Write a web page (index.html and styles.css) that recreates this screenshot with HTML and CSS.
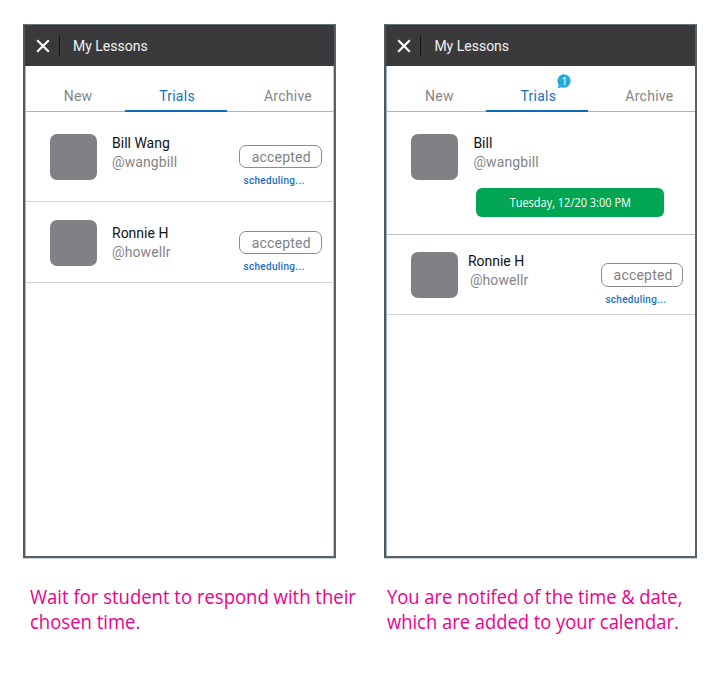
FILE: index.html
```html
<!DOCTYPE html>
<html lang="en">
<head>
<meta charset="utf-8">
<title>My Lessons</title>
<link rel="stylesheet" href="styles.css">
</head>
<body>
<main class="board">
  <section class="column">
    <div class="phone">
      <header class="bar">
        <svg class="close" viewBox="0 0 14 14"><path d="M1.2 1.2 12.8 12.8M12.8 1.2 1.2 12.8"/></svg>
        <span class="divider"></span>
        <h1 class="title">My Lessons</h1>
      </header>
      <nav class="tabs">
        <span class="tab tab-new">New</span>
        <span class="tab tab-trials">Trials</span>
        <span class="tab tab-archive">Archive</span>
      </nav>
      <article class="row row-wang">
        <div class="avatar"></div>
        <div class="who"><div class="name">Bill Wang</div><div class="handle">@wangbill</div></div>
        <div class="state"><span class="pill">accepted</span><span class="note">scheduling...</span></div>
      </article>
      <article class="row row-ronnie">
        <div class="avatar"></div>
        <div class="who"><div class="name">Ronnie H</div><div class="handle">@howellr</div></div>
        <div class="state"><span class="pill">accepted</span><span class="note">scheduling...</span></div>
      </article>
    </div>
    <p class="caption"><span class="line">Wait for student to respond with their</span><span class="line">chosen time.</span></p>
  </section>
  <section class="column">
    <div class="phone">
      <header class="bar">
        <svg class="close" viewBox="0 0 14 14"><path d="M1.2 1.2 12.8 12.8M12.8 1.2 1.2 12.8"/></svg>
        <span class="divider"></span>
        <h1 class="title">My Lessons</h1>
      </header>
      <nav class="tabs">
        <span class="tab tab-new">New</span>
        <span class="tab tab-trials">Trials
          <span class="badge"><svg viewBox="0 0 14 15"><path d="M7 .3a6.7 6.7 0 1 1-2.6 12.9L.9 14.2l.7-3.4A6.7 6.7 0 0 1 7 .3Z"/></svg><b>1</b></span>
        </span>
        <span class="tab tab-archive">Archive</span>
      </nav>
      <article class="row row-booked">
        <div class="avatar"></div>
        <div class="who"><div class="name">Bill</div><div class="handle">@wangbill</div><div class="slot"><span>Tuesday, 12/20 3:00 PM</span></div></div>
      </article>
      <article class="row row-waiting">
        <div class="avatar"></div>
        <div class="who"><div class="name">Ronnie H</div><div class="handle">@howellr</div></div>
        <div class="state"><span class="pill">accepted</span><span class="note">scheduling...</span></div>
      </article>
    </div>
    <p class="caption caption-right"><span class="line">You are notifed of the time &amp; date,</span><span class="line">which are added to your calendar.</span></p>
  </section>
</main>
</body>
</html>
```
FILE: styles.css
```css
* { box-sizing: border-box; }
body {
  margin: 0;
  width: 714px;
  height: 679px;
  overflow: hidden;
  background: #fff;
  font-family: Roboto, "Liberation Sans", sans-serif;
}
.board { display: flex; gap: 48.4px; padding: 24px 0 0 23px; }
.column { width: 313px; flex: none; }
.phone {
  height: 534px;
  border: 2px solid #596168;
  border-top: 1px solid #68747c;
  border-left-color: #55565a;
  box-shadow: inset 1px 0 #82cdea, inset -1px 0 #c4c6c8, 0 1px #c9d3d9;
}
.column + .column .phone { box-shadow: inset 1px 0 #8ab8cd, 0 1px #c9d3d9; }

.bar {
  display: flex;
  align-items: center;
  height: 41px;
  padding-left: 11px;
  background: #3a3a3c;
}
.close { width: 14px; height: 14px; fill: none; stroke: #fff; stroke-width: 2.2; }
.divider { width: 1px; height: 21px; margin-left: 9px; background: #161618; }
.title {
  margin: 0 0 0 13px;
  font-size: 14px;
  font-weight: 400;
  line-height: 16px;
  letter-spacing: 0;
  color: #f2f2f2;
}

.tabs {
  display: grid;
  grid-template-columns: 100px 102px 107px;
  height: 46px;
  box-shadow: inset 0 -1px #b3b4b6;
}
.tab {
  position: relative;
  padding-top: 22px;
  font-size: 14px;
  line-height: 16px;
  letter-spacing: .25px;
  color: #848588;
  text-align: center;
}
.tab-new { padding-left: 6px; }
.tab-archive { padding-left: 15px; }
.tab-trials { padding-left: 2px; color: #1670bd; border-bottom: 2px solid #0b6db8; }
.badge { position: absolute; left: 71px; top: 8px; width: 14px; height: 15px; }
.badge svg { display: block; width: 14px; height: 15px; fill: #25a9e0; }
.badge b {
  position: absolute;
  inset: 0 0 2px 0;
  font: 11px/13px "Open Sans", sans-serif;
  letter-spacing: 0;
  color: #fff;
}

.row {
  display: flex;
  align-items: flex-start;
  margin: 0 0 0 1px;
  padding-left: 24px;
  border-bottom: 1px solid #d2d3d5;
}
.avatar { flex: none; width: 46.5px; height: 46.5px; border-radius: 7px; background: #808184; }
.who { flex: 1; padding-left: 15.5px; }
.name { font-size: 14px; line-height: 19px; letter-spacing: 0; color: #111; }
.handle { font-size: 14px; line-height: 19px; letter-spacing: .1px; color: #848588; }
.state { width: 82.5px; margin-right: 12.5px; }
.pill {
  display: block;
  height: 23.5px;
  border: 1px solid #8b8c8f;
  border-radius: 7px;
  padding-left: 2px;
  font-size: 14px;
  line-height: 22px;
  letter-spacing: .2px;
  color: #808184;
  text-align: center;
}
.note {
  display: block;
  margin: 6px 0 0 4.5px;
  font-size: 10px;
  line-height: 14px;
  letter-spacing: .3px;
  font-weight: 500;
  color: #1a6fc0;
  white-space: nowrap;
}
.row-wang { height: 90px; padding-top: 21.5px; }
.row-ronnie { height: 81px; padding-top: 17.5px; }
.row-ronnie .who { padding-top: 4px; }
.row-wang .state { padding-top: 11px; }
.row-ronnie .state { padding-top: 11px; }
.row-booked { height: 123px; padding-top: 21.5px; border-color: #bfc0c2; }
.slot {
  width: 188.5px;
  height: 28.5px;
  margin: 16.5px 0 0 2.5px;
  border-radius: 6px;
  background: #00a651;
  font: 12px/29px "Open Sans", sans-serif;
  color: #fff;
  text-align: center;
}
.slot span { display: inline-block; transform: scaleX(.915); }
.row-waiting { height: 80px; padding-top: 16.5px; }
.row-waiting .who { padding-left: 10px; }
.row-waiting .handle { padding-left: 2px; }
.row-waiting .state { padding-top: 11.5px; margin-right: 12px; }

.caption {
  margin: 26px 0 0 7px;
  font: 20px/25px "Open Sans", sans-serif;
  color: #ec008c;
  white-space: nowrap;
}
.line { display: block; transform: scaleX(.925); transform-origin: 0 50%; }
.caption-right { margin-left: 3px; }
.caption-right .line { transform: scaleX(.918); }
```
